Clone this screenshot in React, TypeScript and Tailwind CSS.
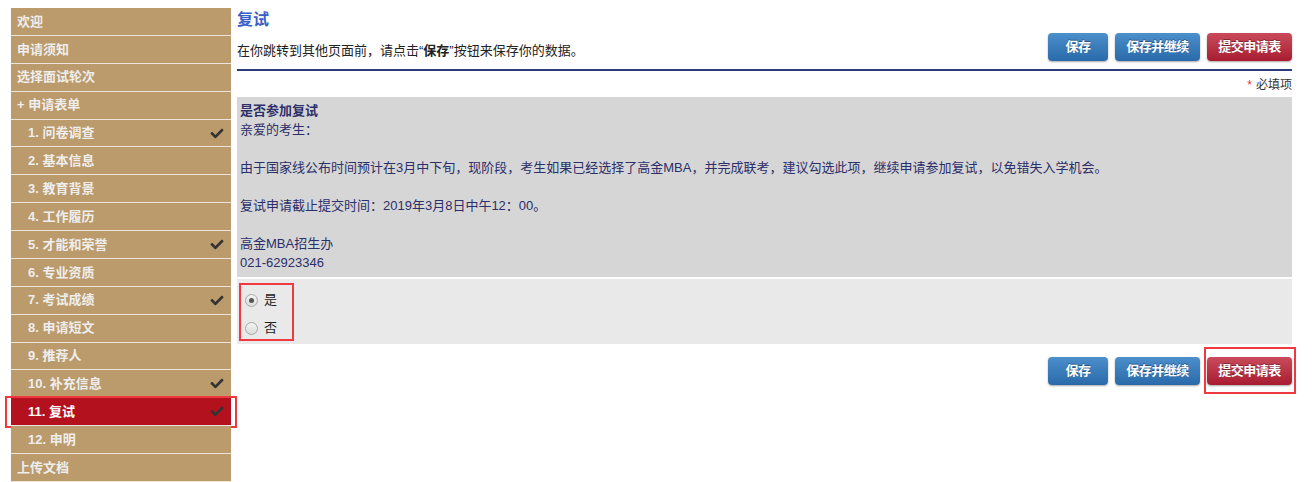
import React from "react";
import { FaCheck } from "react-icons/fa";

const FONT = { fontFamily: '"Liberation Sans", "Noto Sans CJK SC", sans-serif' };

type Item = { label: string; sub?: boolean; done?: boolean; active?: boolean };

const items: Item[] = [
  { label: "欢迎" },
  { label: "申请须知" },
  { label: "选择面试轮次" },
  { label: "+ 申请表单" },
  { label: "1. 问卷调查", sub: true, done: true },
  { label: "2. 基本信息", sub: true },
  { label: "3. 教育背景", sub: true },
  { label: "4. 工作履历", sub: true },
  { label: "5. 才能和荣誉", sub: true, done: true },
  { label: "6. 专业资质", sub: true },
  { label: "7. 考试成绩", sub: true, done: true },
  { label: "8. 申请短文", sub: true },
  { label: "9. 推荐人", sub: true },
  { label: "10. 补充信息", sub: true, done: true },
  { label: "11. 复试", sub: true, done: true, active: true },
  { label: "12. 申明", sub: true },
  { label: "上传文档" },
];

function Btn({ label, red, wide }: { label: string; red?: boolean; wide?: boolean }) {
  const base =
    "h-[28px] rounded-[4px] text-white text-[13px] font-bold shadow-[0_1px_2px_rgba(0,0,0,0.35)] [text-shadow:0_-1px_0_rgba(0,0,0,0.35)] flex items-center justify-center tracking-[-0.5px] ";
  return (
    <button
      className={
        base +
        (wide ? "w-[85px] " : "w-[60px] ") +
        (red
          ? "bg-gradient-to-b from-[#c94a5c] to-[#a81a30]"
          : "bg-gradient-to-b from-[#4b8fcb] to-[#2a6aaa]")
      }
    >
      {label}
    </button>
  );
}

function Radio({ checked, label }: { checked?: boolean; label: string }) {
  return (
    <div className="flex items-center h-[28px]">
      <span className="w-[13px] h-[13px] rounded-full border border-[#a9a9a9] bg-gradient-to-b from-[#f4f4f4] to-[#dcdcdc] flex items-center justify-center">
        {checked && <span className="w-[5px] h-[5px] rounded-full bg-[#555]" />}
      </span>
      <span className="ml-[6px] text-[13px] text-[#222]">{label}</span>
    </div>
  );
}

export default function App() {
  return (
    <div className="w-[1315px] h-[482px] overflow-hidden bg-white flex pl-[11px] pt-[8px]" style={FONT}>
      <div className="w-[220px] shrink-0 flex flex-col">
        {items.map((it) => (
          <div
            key={it.label}
            className={
              "relative h-[28px] flex items-center border-b border-[#ece4d8] text-[13px] font-bold " +
              (it.active ? "bg-[#b3111e] text-white " : "bg-[#bb9a6b] text-[#eeeeee] ") +
              (it.sub ? "pl-[17px]" : "pl-[6px]")
            }
          >
            <span>{it.label}</span>
            {it.done && (
              <FaCheck className="absolute right-[6px] top-[7px] w-[16px] h-[13px] text-[#333]" />
            )}
            {it.active && (
              <div className="absolute left-[-6px] right-[-6px] top-[-2px] bottom-[-3px] border-2 border-[#ee3a3f]" />
            )}
          </div>
        ))}
      </div>

      <div className="ml-[6px] w-[1055px] flex flex-col">
        <div className="h-[25px] flex items-start">
          <h1 className="text-[16px] font-bold text-[#3b5fc8] leading-[21px] mt-[1px]">复试</h1>
        </div>
        <div className="h-[28px] flex items-center justify-between">
          <p className="text-[13px] text-[#222] pt-[7px]">
            在你跳转到其他页面前，请点击“<b>保存</b>”按钮来保存你的数据。
          </p>
          <div className="flex gap-[7px]">
            <Btn label="保存" />
            <Btn label="保存并继续" wide />
            <Btn label="提交申请表" wide red />
          </div>
        </div>
        <div className="mt-[8px] h-[2px] bg-[#2e3a7c]" />
        <div className="h-[26px] flex items-center justify-end text-[12px] text-[#333] pt-[1px]">
          <span className="text-[#e53935] mr-[4px]">*</span>必填项
        </div>
        <div className="bg-[#d6d6d6] pl-[3px] pt-[4px] pb-[5px] text-[13px] leading-[19px] text-[#2c2f6a]">
          <div className="font-bold">是否参加复试</div>
          <div>亲爱的考生：</div>
          <div>&nbsp;</div>
          <div>
            由于国家线公布时间预计在3月中下旬，现阶段，考生如果已经选择了高金MBA，并完成联考，建议勾选此项，继续申请参加复试，以免错失入学机会。
          </div>
          <div>&nbsp;</div>
          <div>复试申请截止提交时间：2019年3月8日中午12：00。</div>
          <div>&nbsp;</div>
          <div>高金MBA招生办</div>
          <div>021-62923346</div>
        </div>
        <div className="mt-[2px] bg-[#e9e9e9] h-[65px] pt-[4px] pl-[2px]">
          <div className="w-[55px] h-[58px] border-2 border-[#ee3a3f] pl-[4px] pt-[1px]">
            <Radio checked label="是" />
            <Radio label="否" />
          </div>
        </div>
        <div className="mt-[13px] flex justify-end gap-[7px]">
          <Btn label="保存" />
          <Btn label="保存并继续" wide />
          <div className="relative">
            <Btn label="提交申请表" wide red />
            <div className="absolute left-[-3px] right-[-4px] top-[-10px] bottom-[-9px] border-2 border-[#ee3a3f]" />
          </div>
        </div>
      </div>
    </div>
  );
}
